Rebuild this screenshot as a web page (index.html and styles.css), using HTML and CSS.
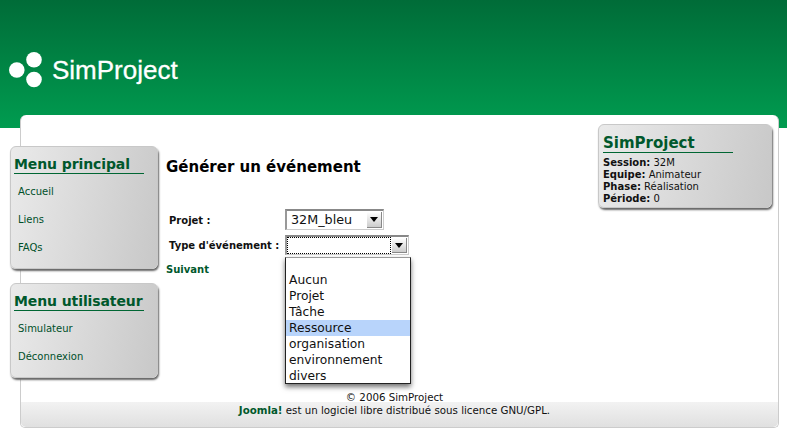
FILE: index.html
```html
<!DOCTYPE html>
<html lang="fr">
<head>
<meta charset="utf-8">
<title>SimProject</title>
<link rel="stylesheet" href="styles.css">
</head>
<body>
<header class="header">
  <svg class="logo-mark" width="36" height="36" viewBox="0 0 36 36" aria-hidden="true">
    <circle cx="7.8" cy="18" r="7.8" fill="#fff"/>
    <circle cx="25" cy="7.8" r="7.8" fill="#fff"/>
    <circle cx="25" cy="27.5" r="7.8" fill="#fff"/>
  </svg>
  <span class="logo-text">SimProject</span>
</header>
<div class="page">
  <div class="columns">
    <aside class="sidebar">
      <section class="box menu-one">
        <h3 class="box-title">Menu principal</h3>
        <ul class="menu">
          <li>Accueil</li>
          <li>Liens</li>
          <li>FAQs</li>
        </ul>
      </section>
      <section class="box menu-two">
        <h3 class="box-title">Menu utilisateur</h3>
        <ul class="menu">
          <li>Simulateur</li>
          <li>Déconnexion</li>
        </ul>
      </section>
    </aside>
    <main class="main">
      <h1 class="page-title">Générer un événement</h1>
      <div class="form-row row-project">
        <span class="label">Projet :</span>
        <span class="select select-project">
          <span class="select-value">32M_bleu</span>
          <span class="select-arrow"><i class="arrow-glyph"></i></span>
        </span>
      </div>
      <div class="form-row row-type">
        <span class="label">Type d'événement :</span>
        <span class="select select-type">
          <span class="select-value focus-value"></span>
          <span class="select-arrow"><i class="arrow-glyph"></i></span>
          <ul class="dropdown">
            <li>&nbsp;</li>
            <li>Aucun</li>
            <li>Projet</li>
            <li>Tâche</li>
            <li class="selected">Ressource</li>
            <li>organisation</li>
            <li>environnement</li>
            <li>divers</li>
          </ul>
        </span>
      </div>
      <div class="next">Suivant</div>
    </main>
    <aside class="right">
      <section class="box info">
        <h3 class="box-title info-title">SimProject</h3>
        <p class="info-line"><b>Session:</b> 32M</p>
        <p class="info-line"><b>Equipe:</b> Animateur</p>
        <p class="info-line"><b>Phase:</b> Réalisation</p>
        <p class="info-line"><b>Période:</b> 0</p>
      </section>
    </aside>
  </div>
  <footer class="footer">
    <div class="copyright">© 2006 SimProject</div>
    <div class="license"><b>Joomla!</b> est un logiciel libre distribué sous licence GNU/GPL.</div>
  </footer>
</div>
</body>
</html>
```
FILE: styles.css
```css
* { box-sizing: border-box; }
html, body { margin: 0; padding: 0; }
body {
  background: #fff;
  color: #111;
  font-family: "DejaVu Sans", Verdana, sans-serif;
  font-size: 10px;
  width: 787px;
  height: 437px;
  overflow: hidden;
}
.header {
  height: 128px;
  background: linear-gradient(#006c38, #009c50);
  display: flex;
  align-items: flex-start;
  padding: 52px 0 0 9px;
}
.logo-mark { display: block; flex: none; }
.logo-text {
  color: #fff;
  font-family: "Liberation Sans", Arial, sans-serif;
  font-size: 26px;
  line-height: 36px;
  margin-left: 7px;
  -webkit-text-stroke: 0.3px #fff;
}
.page {
  margin: -13px 0 0 20px;
  width: 759px;
  height: 313px;
  border: 1px solid #ccc;
  border-top: 0;
  border-radius: 6px 6px 5px 5px;
  background: #fff;
  display: flex;
  flex-direction: column;
}
.columns {
  flex: 1;
  display: flex;
  min-height: 0;
}
.sidebar {
  width: 148px;
  margin-left: -11px;
  padding-top: 31px;
  display: flex;
  flex-direction: column;
  gap: 14px;
  flex: none;
}
.box {
  background: linear-gradient(100deg, #eaeaea, #c8c8c8);
  border: 1px solid #c8c8c8;
  border-radius: 6px;
  box-shadow: 1px 2px 2px #666;
  padding: 8px 0 0 3px;
}
.box-title {
  margin: 0;
  width: 130px;
  color: #00582c;
  font-size: 14px;
  letter-spacing: -0.1px;
  line-height: 18px;
  font-weight: bold;
  border-bottom: 1px solid #006633;
  height: 19px;
  white-space: nowrap;
}
.menu {
  list-style: none;
  margin: 0;
  padding: 4px 0 0 4px;
  color: #00502a;
}
.menu li { height: 28px; line-height: 28px; }
.menu-one { height: 123px; }
.menu-two { height: 95px; }
.main {
  flex: 1;
  padding: 42px 0 0 8px;
}
.page-title {
  margin: 0;
  font-size: 15px;
  line-height: 20px;
  font-weight: bold;
  color: #000;
}
.form-row {
  display: flex;
  align-items: flex-start;
  padding-left: 3px;
}
.row-project { margin-top: 32px; height: 23px; }
.row-type { height: 22px; margin-top: 2px; }
.label {
  width: 116px;
  align-self: center;
  font-weight: bold;
  color: #111;
}
.select {
  display: flex;
  position: relative;
  background: #fff;
  border: 1px solid #ccc;
  border-top: 2px solid #888;
  border-left: 2px solid #999;
}
.select-project { width: 99px; height: 21px; font-size: 12.75px; }
.select-type { width: 124px; height: 20px; margin-top: 1px; }
.select-value {
  flex: 1;
  padding-left: 4px;
  line-height: 18px;
}
.focus-value {
  border: 1px dotted #000;
}
.select-arrow {
  width: 15px;
  margin: 1px;
  background: linear-gradient(#fff, #ccc);
  border-right: 1px solid #888;
  border-bottom: 1px solid #888;
  display: flex;
  align-items: center;
  justify-content: center;
}
.arrow-glyph {
  width: 0;
  height: 0;
  border-left: 4px solid transparent;
  border-right: 4px solid transparent;
  border-top: 5px solid #000;
}
.dropdown {
  position: absolute;
  left: -2px;
  top: 20px;
  width: 126px;
  margin: 0;
  padding: 8px 0 0;
  list-style: none;
  background: #fff;
  border: 1px solid #222;
  border-top: 1px solid #999;
  box-shadow: 0 3px 5px rgba(0, 0, 0, .55);
  font-size: 12.25px;
  color: #111;
  height: 127px;
}
.dropdown li { height: 16px; line-height: 16px; padding-left: 3px; }
.dropdown li:first-child { height: 6px; line-height: 6px; }
.dropdown .selected { background: #b8d4fb; }
.next {
  margin-top: 8px;
  font-weight: bold;
  color: #00582c;
  line-height: 12px;
}
.right {
  width: 180px;
  flex: none;
  padding-top: 9px;
}
.info { width: 174px; height: 84px; padding: 9px 0 0 4px; }
.info-title { margin-bottom: 4px; font-size: 15px; letter-spacing: 0; }
.info-line { margin: 0; line-height: 12px; color: #111; }
.footer {
  height: 40px;
  text-align: center;
  background: linear-gradient(#fff 0, #fff 15px, #f2f2f2 15px, #e0e0e0 100%);
  border-radius: 0 0 5px 5px;
  line-height: 12px;
  padding: 4px 10px 0 0;
  font-size: 10.25px;
}
.copyright { height: 13px; }
.license b { color: #00582c; }
```
